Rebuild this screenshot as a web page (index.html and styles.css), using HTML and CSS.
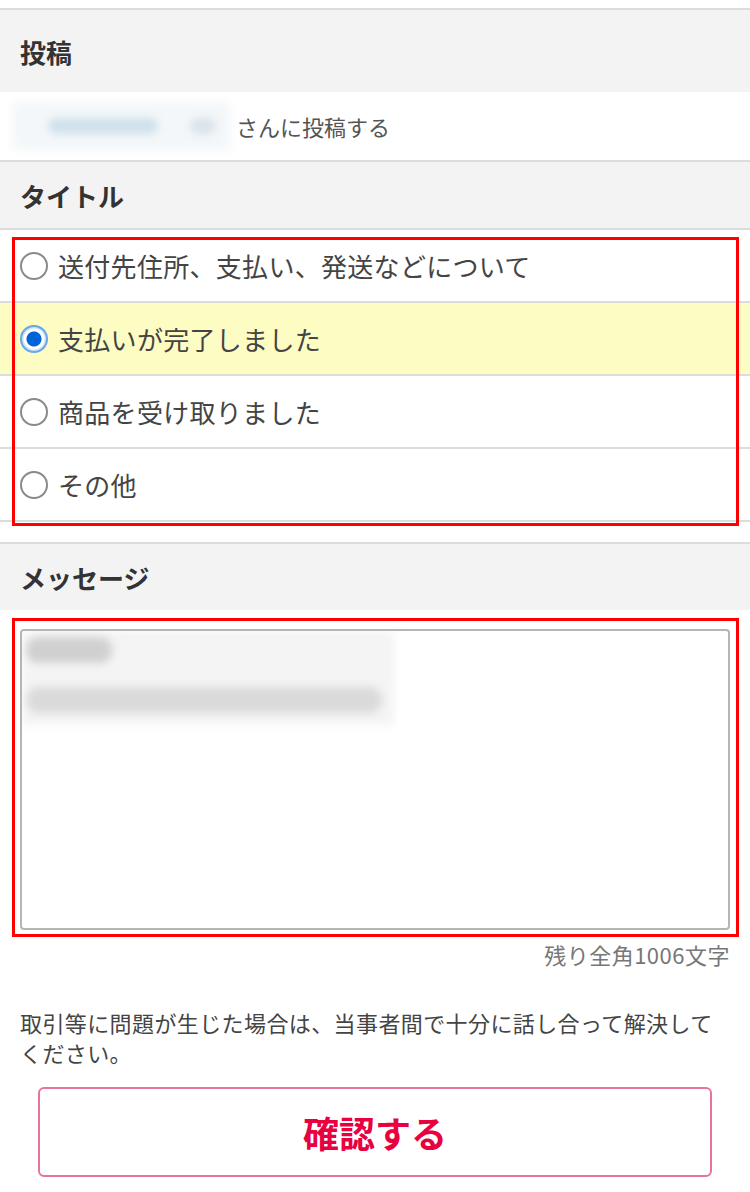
FILE: index.html
```html
<!DOCTYPE html>
<html lang="ja">
<head>
    <meta charset="UTF-8">
    <meta name="viewport" content="width=device-width, initial-scale=1.0">
    <title>投稿</title>
    <link rel="stylesheet" href="styles.css">
</head>
<body>
    <div class="top-space"></div>

    <div class="section-head first">投稿</div>
    <div class="recipient">
        <span class="blur-name"><span class="blob b1"></span><span class="blob b2"></span></span>
        <span class="recipient-text">さんに投稿する</span>
    </div>

    <div class="section-head">タイトル</div>
    <div class="radio-list">
        <label class="radio-row">
            <input type="radio" name="title">
            <span>送付先住所、支払い、発送などについて</span>
        </label>
        <label class="radio-row selected">
            <input type="radio" name="title" checked>
            <span>支払いが完了しました</span>
        </label>
        <label class="radio-row">
            <input type="radio" name="title">
            <span>商品を受け取りました</span>
        </label>
        <label class="radio-row">
            <input type="radio" name="title">
            <span>その他</span>
        </label>
        <div class="mark mark-radios"></div>
    </div>

    <div class="section-head spaced">メッセージ</div>
    <div class="message-area">
        <div class="message-box">
            <div class="blur-text">
                <span class="line l1"></span>
                <span class="line l2"></span>
            </div>
        </div>
        <div class="mark mark-message"></div>
    </div>
    <div class="counter">残り全角1006文字</div>

    <p class="notice">取引等に問題が生じた場合は、当事者間で十分に話し合って解決してください。</p>

    <div class="actions">
        <button class="confirm-button">確認する</button>
    </div>
</body>
</html>
```

FILE: styles.css
```css
body {
    margin: 0;
    background: #fff;
    font-family: "Noto Sans CJK JP", "Noto Sans", sans-serif;
    color: #333;
}
.top-space {
    height: 8px;
}
.section-head {
    border-top: 2px solid #dcdcdc;
    background: #f3f3f3;
    height: 66px;
    padding-left: 20px;
    display: flex;
    align-items: center;
    font-size: 26px;
    font-weight: bold;
    color: #333;
}
.section-head.first {
    height: 82px;
}
.section-head.spaced {
    margin-top: 20px;
}
.recipient {
    height: 68px;
    display: flex;
    align-items: center;
    padding-left: 12px;
}
.blur-name {
    position: relative;
    width: 218px;
    height: 48px;
    background: #f4f7f9;
    filter: blur(4px);
    overflow: hidden;
}
.blob {
    position: absolute;
    top: 16px;
    height: 16px;
    border-radius: 8px;
    background: #cfe0ec;
}
.b1 {
    left: 36px;
    width: 110px;
}
.b2 {
    left: 178px;
    width: 26px;
    background: #d9e3ea;
}
.recipient-text {
    font-size: 22px;
    color: #555;
    margin-left: 6px;
}
.radio-list {
    position: relative;
    border-top: 2px solid #dcdcdc;
}
.radio-row {
    height: 71px;
    border-bottom: 2px solid #dcdcdc;
    display: flex;
    align-items: center;
    padding-left: 20px;
    font-size: 26px;
    letter-spacing: 0.3px;
    color: #444;
}
.radio-row.selected {
    background: #fdfcc2;
}
.radio-row input {
    appearance: none;
    margin: 0 10px 0 0;
    width: 28px;
    height: 28px;
    border: 2px solid #8a8a8a;
    border-radius: 50%;
    background: #fff;
    box-sizing: border-box;
}
.radio-row input:checked {
    border: 2px solid #6aa6e8;
    background: radial-gradient(circle, #0063d6 0 7px, #fff 8px 10px, #cfe2f7 11px);
}
.mark {
    position: absolute;
    border: 3px solid #ff0000;
    box-sizing: border-box;
    pointer-events: none;
}
.mark-radios {
    left: 12px;
    right: 11px;
    top: 7px;
    bottom: -4px;
}
.message-area {
    position: relative;
    padding: 19px 20px 7px 20px;
}
.message-box {
    height: 301px;
    border: 2px solid #b5b5b5;
    border-radius: 4px;
    box-sizing: border-box;
    overflow: hidden;
}
.blur-text {
    width: 372px;
    height: 94px;
    background: #f4f4f4;
    filter: blur(4px);
    position: relative;
}
.line {
    position: absolute;
    left: 4px;
    height: 26px;
    border-radius: 12px;
    background: #d0d0d0;
}
.l1 {
    top: 6px;
    width: 86px;
}
.l2 {
    top: 56px;
    width: 356px;
    background: #dadada;
}
.mark-message {
    left: 12px;
    right: 11px;
    top: 8px;
    bottom: 0;
}
.counter {
    text-align: right;
    padding-right: 20px;
    margin-top: 2px;
    font-size: 22px;
    letter-spacing: 0.5px;
    line-height: 30px;
    color: #777;
}
.notice {
    margin: 38px 20px 0 20px;
    font-size: 22px;
    letter-spacing: 0.4px;
    line-height: 30px;
    color: #444;
}
.actions {
    padding: 20px 38px 0 38px;
}
.confirm-button {
    width: 100%;
    height: 90px;
    background: #fff;
    border: 2px solid #e87598;
    border-radius: 6px;
    font-family: "Noto Sans CJK JP", sans-serif;
    font-size: 36px;
    font-weight: bold;
    color: #e8003f;
}
```
